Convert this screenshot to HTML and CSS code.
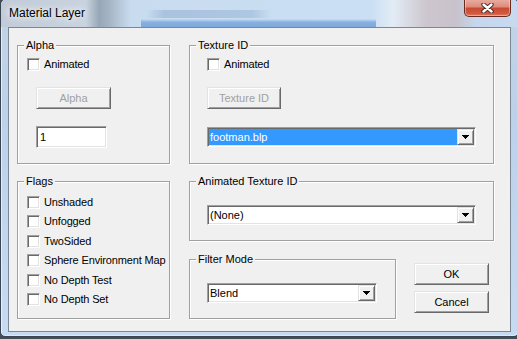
FILE: index.html
```html
<!DOCTYPE html>
<html>
<head>
  <meta charset="UTF-8">
  <meta name="viewport" content="width=device-width, initial-scale=1.0">
  <title>Material Layer</title>
  <link rel="stylesheet" href="styles.css">
</head>
<body>
  <div class="window">
    <div class="titlebar">
      <span class="title">Material Layer</span>
      <button class="close" type="button" aria-label="Close">
        <svg width="13" height="10" viewBox="0 0 13 10">
          <path d="M2.5 1.5l8 7M10.5 1.5l-8 7" stroke="#4a2c28" stroke-width="4.4" stroke-linecap="round"/>
          <path d="M2.5 1.5l8 7M10.5 1.5l-8 7" stroke="#fff" stroke-width="2.4" stroke-linecap="round"/>
        </svg>
      </button>
    </div>

    <div class="client">
      <div class="col col-left">
        <div class="group group-alpha">
          <div class="group-title">Alpha</div>
          <div class="group-body">
            <label class="check"><input type="checkbox"><span>Animated</span></label>
            <button class="btn btn-alpha" type="button" disabled>Alpha</button>
            <input class="edit" type="text" value="1">
          </div>
        </div>

        <div class="group group-flags">
          <div class="group-title">Flags</div>
          <div class="group-body flag-list">
            <label class="check"><input type="checkbox"><span>Unshaded</span></label>
            <label class="check"><input type="checkbox"><span>Unfogged</span></label>
            <label class="check"><input type="checkbox"><span>TwoSided</span></label>
            <label class="check"><input type="checkbox"><span>Sphere Environment Map</span></label>
            <label class="check"><input type="checkbox"><span>No Depth Test</span></label>
            <label class="check"><input type="checkbox"><span>No Depth Set</span></label>
          </div>
        </div>
      </div>

      <div class="col col-right">
        <div class="group group-texture">
          <div class="group-title">Texture ID</div>
          <div class="group-body">
            <label class="check"><input type="checkbox"><span>Animated</span></label>
            <button class="btn btn-texture" type="button" disabled>Texture ID</button>
            <div class="combo combo-texture">
              <span class="combo-text selected">footman.blp</span>
              <span class="combo-arrow"><svg width="7" height="4" viewBox="0 0 7 4"><path d="M0 0h7v1H0zM1 1h5v1H1zM2 2h3v1H2zM3 3h1v1H3z" fill="#000"/></svg></span>
            </div>
          </div>
        </div>

        <div class="group group-anim">
          <div class="group-title">Animated Texture ID</div>
          <div class="group-body">
            <div class="combo combo-anim">
              <span class="combo-text">(None)</span>
              <span class="combo-arrow"><svg width="7" height="4" viewBox="0 0 7 4"><path d="M0 0h7v1H0zM1 1h5v1H1zM2 2h3v1H2zM3 3h1v1H3z" fill="#000"/></svg></span>
            </div>
          </div>
        </div>

        <div class="bottom-row">
          <div class="group group-filter">
            <div class="group-title">Filter Mode</div>
            <div class="group-body">
              <div class="combo combo-filter">
                <span class="combo-text">Blend</span>
                <span class="combo-arrow"><svg width="7" height="4" viewBox="0 0 7 4"><path d="M0 0h7v1H0zM1 1h5v1H1zM2 2h3v1H2zM3 3h1v1H3z" fill="#000"/></svg></span>
              </div>
            </div>
          </div>
          <div class="actions">
            <button class="btn btn-action" type="button">OK</button>
            <button class="btn btn-action" type="button">Cancel</button>
          </div>
        </div>
      </div>
    </div>
  </div>
</body>
</html>
```

FILE: styles.css
```css
* {
  box-sizing: border-box;
}

html,
body {
  margin: 0;
  height: 100%;
  overflow: hidden;
}

body {
  background: #454c56;
  font-family: "Liberation Sans", Arial, sans-serif;
  font-size: 11px;
  color: #000;
}

/* glass frame */
.window {
  width: 519px;
  height: 339px;
  margin-top: -2px;
  padding: 0 7px 4px 7px;
  border: 1px solid #3a4452;
  border-radius: 7px 7px 5px 5px;
  background: linear-gradient(to bottom, #c3d3e4 0, #bcd2ea 120px, #c6dbf1 100%);
  box-shadow: inset 1px 1px 0 rgba(255, 255, 255, 0.6), inset -1px -1px 0 rgba(255, 255, 255, 0.4);
  display: flex;
  flex-direction: column;
}

.titlebar {
  height: 28px;
  margin: 0 -7px;
  padding: 0 7px 0 8px;
  border-radius: 6px 6px 0 0;
  display: flex;
  justify-content: space-between;
  align-items: flex-start;
  background:
    linear-gradient(to bottom, rgba(120, 165, 220, 0) 0, #86b0e0 40%, #80a9dc 100%) 140px 20px / 235px 8px no-repeat,
    linear-gradient(to right, rgba(110, 145, 190, 0), rgba(110, 145, 190, 0.35) 15%, rgba(110, 145, 190, 0.3) 85%, rgba(110, 145, 190, 0)) 145px 11px / 125px 8px no-repeat,
    linear-gradient(to right, #c2ccd8 0, #c8d3df 85px, #98a7b7 98px, #a5b4c4 108px, #c9dcef 130px, #cadff4 370px, #e2ecf5 392px, #cdc6ce 425px, #c8c2cc 455px, #c5d7ec 475px, #c7daef 100%);
}

.title {
  padding-top: 7px;
  font-size: 12px;
  line-height: 14px;
  text-shadow: 0 0 6px #fff, 0 0 10px rgba(255, 255, 255, 0.9);
}

.close {
  width: 47px;
  height: 18px;
  padding: 0;
  border: 1px solid #6a2a22;
  border-top: 0;
  border-radius: 0 0 5px 5px;
  background: linear-gradient(to bottom, #e9b0a3 0, #de8c7b 45%, #c94a33 55%, #cf5a40 85%, #e07a5c 100%);
  box-shadow: inset 0 0 0 1px rgba(255, 230, 220, 0.45);
  display: flex;
  align-items: center;
  justify-content: center;
}

/* dialog client area */
.client {
  height: 305px;
  border: 1px solid #7b8795;
  background: #f0f0f0;
  display: flex;
  gap: 19px;
  padding: 17px 0 0 8px;
}

.col {
  display: flex;
  flex-direction: column;
}

.col-left {
  width: 153px;
  gap: 17px;
}

.col-right {
  width: 305px;
}

.group {
  border: 1px solid #a0a0a0;
  box-shadow: inset 1px 1px 0 #fff, 1px 1px 0 #fff;
}

.group-title {
  width: fit-content;
  margin: -7px 0 0 6px;
  padding: 0 2px;
  line-height: 13px;
  background: #f0f0f0;
}

.group-body {
  display: flex;
  flex-direction: column;
  align-items: flex-start;
}

.group-alpha,
.group-texture {
  height: 119px;
}

.group-alpha .group-body {
  padding: 6px 0 0 9px;
}

.group-flags {
  height: 138px;
}

.flag-list {
  padding: 8px 0 0 9px;
  gap: 6.4px;
}

.group-texture .group-body {
  padding: 6px 0 0 17px;
}

.group-anim {
  height: 60px;
  margin-top: 17px;
}

.group-anim .group-body,
.group-filter .group-body {
  padding: 17px 0 0 17px;
}

.bottom-row {
  display: flex;
  margin-top: 18px;
}

.group-filter {
  width: 207px;
  height: 60px;
}

.actions {
  display: flex;
  flex-direction: column;
  gap: 6px;
  padding-top: 4px;
  margin-left: 18px;
}

/* controls */
.check {
  display: flex;
  align-items: center;
  gap: 4px;
  height: 13px;
  line-height: 13px;
  white-space: nowrap;
  letter-spacing: -0.15px;
}

.check input {
  appearance: none;
  -webkit-appearance: none;
  width: 13px;
  height: 13px;
  margin: 0;
  border: 1px solid;
  border-color: #a0a0a0 #fff #fff #a0a0a0;
  box-shadow: inset 1px 1px 0 #696969, inset -1px -1px 0 #e3e3e3;
  background: #fff;
}

.btn {
  height: 22px;
  padding: 0;
  border: 1px solid;
  border-color: #e3e3e3 #696969 #696969 #e3e3e3;
  box-shadow: inset 1px 1px 0 #fff, inset -1px -1px 0 #a0a0a0;
  background: #f0f0f0;
  font-family: inherit;
  font-size: 11px;
  color: #000;
}

.btn:disabled {
  color: #a0a0a0;
}

.btn-alpha {
  width: 75px;
  margin: 16px 0 0 9px;
}

.btn-texture {
  width: 74px;
  margin-top: 16px;
}

.btn-action {
  width: 75px;
}

.edit {
  width: 71px;
  height: 22px;
  margin: 17px 0 0 9px;
  padding: 0 3px;
  border: 1px solid;
  border-color: #a0a0a0 #fff #fff #a0a0a0;
  box-shadow: inset 1px 1px 0 #696969, inset -1px -1px 0 #e3e3e3;
  background: #fff;
  font-family: inherit;
  font-size: 11px;
  outline: none;
}

.combo {
  display: flex;
  height: 20px;
  padding: 1px;
  border: 1px solid;
  border-color: #a0a0a0 #fff #fff #a0a0a0;
  box-shadow: inset 1px 1px 0 #696969, inset -1px -1px 0 #e3e3e3;
  background: #fff;
}

.combo-texture {
  width: 269px;
  margin-top: 18px;
}

.combo-anim {
  width: 269px;
}

.combo-filter {
  width: 170px;
}

.combo-text {
  flex: 1;
  padding-left: 1px;
  line-height: 16px;
}

.combo-text.selected {
  background: #3399ff;
  color: #fff;
}

.combo-arrow {
  width: 17px;
  height: 16px;
  border: 1px solid;
  border-color: #e3e3e3 #696969 #696969 #e3e3e3;
  box-shadow: inset 1px 1px 0 #fff, inset -1px -1px 0 #a0a0a0;
  background: #f0f0f0;
  display: flex;
  align-items: center;
  justify-content: center;
}
```
